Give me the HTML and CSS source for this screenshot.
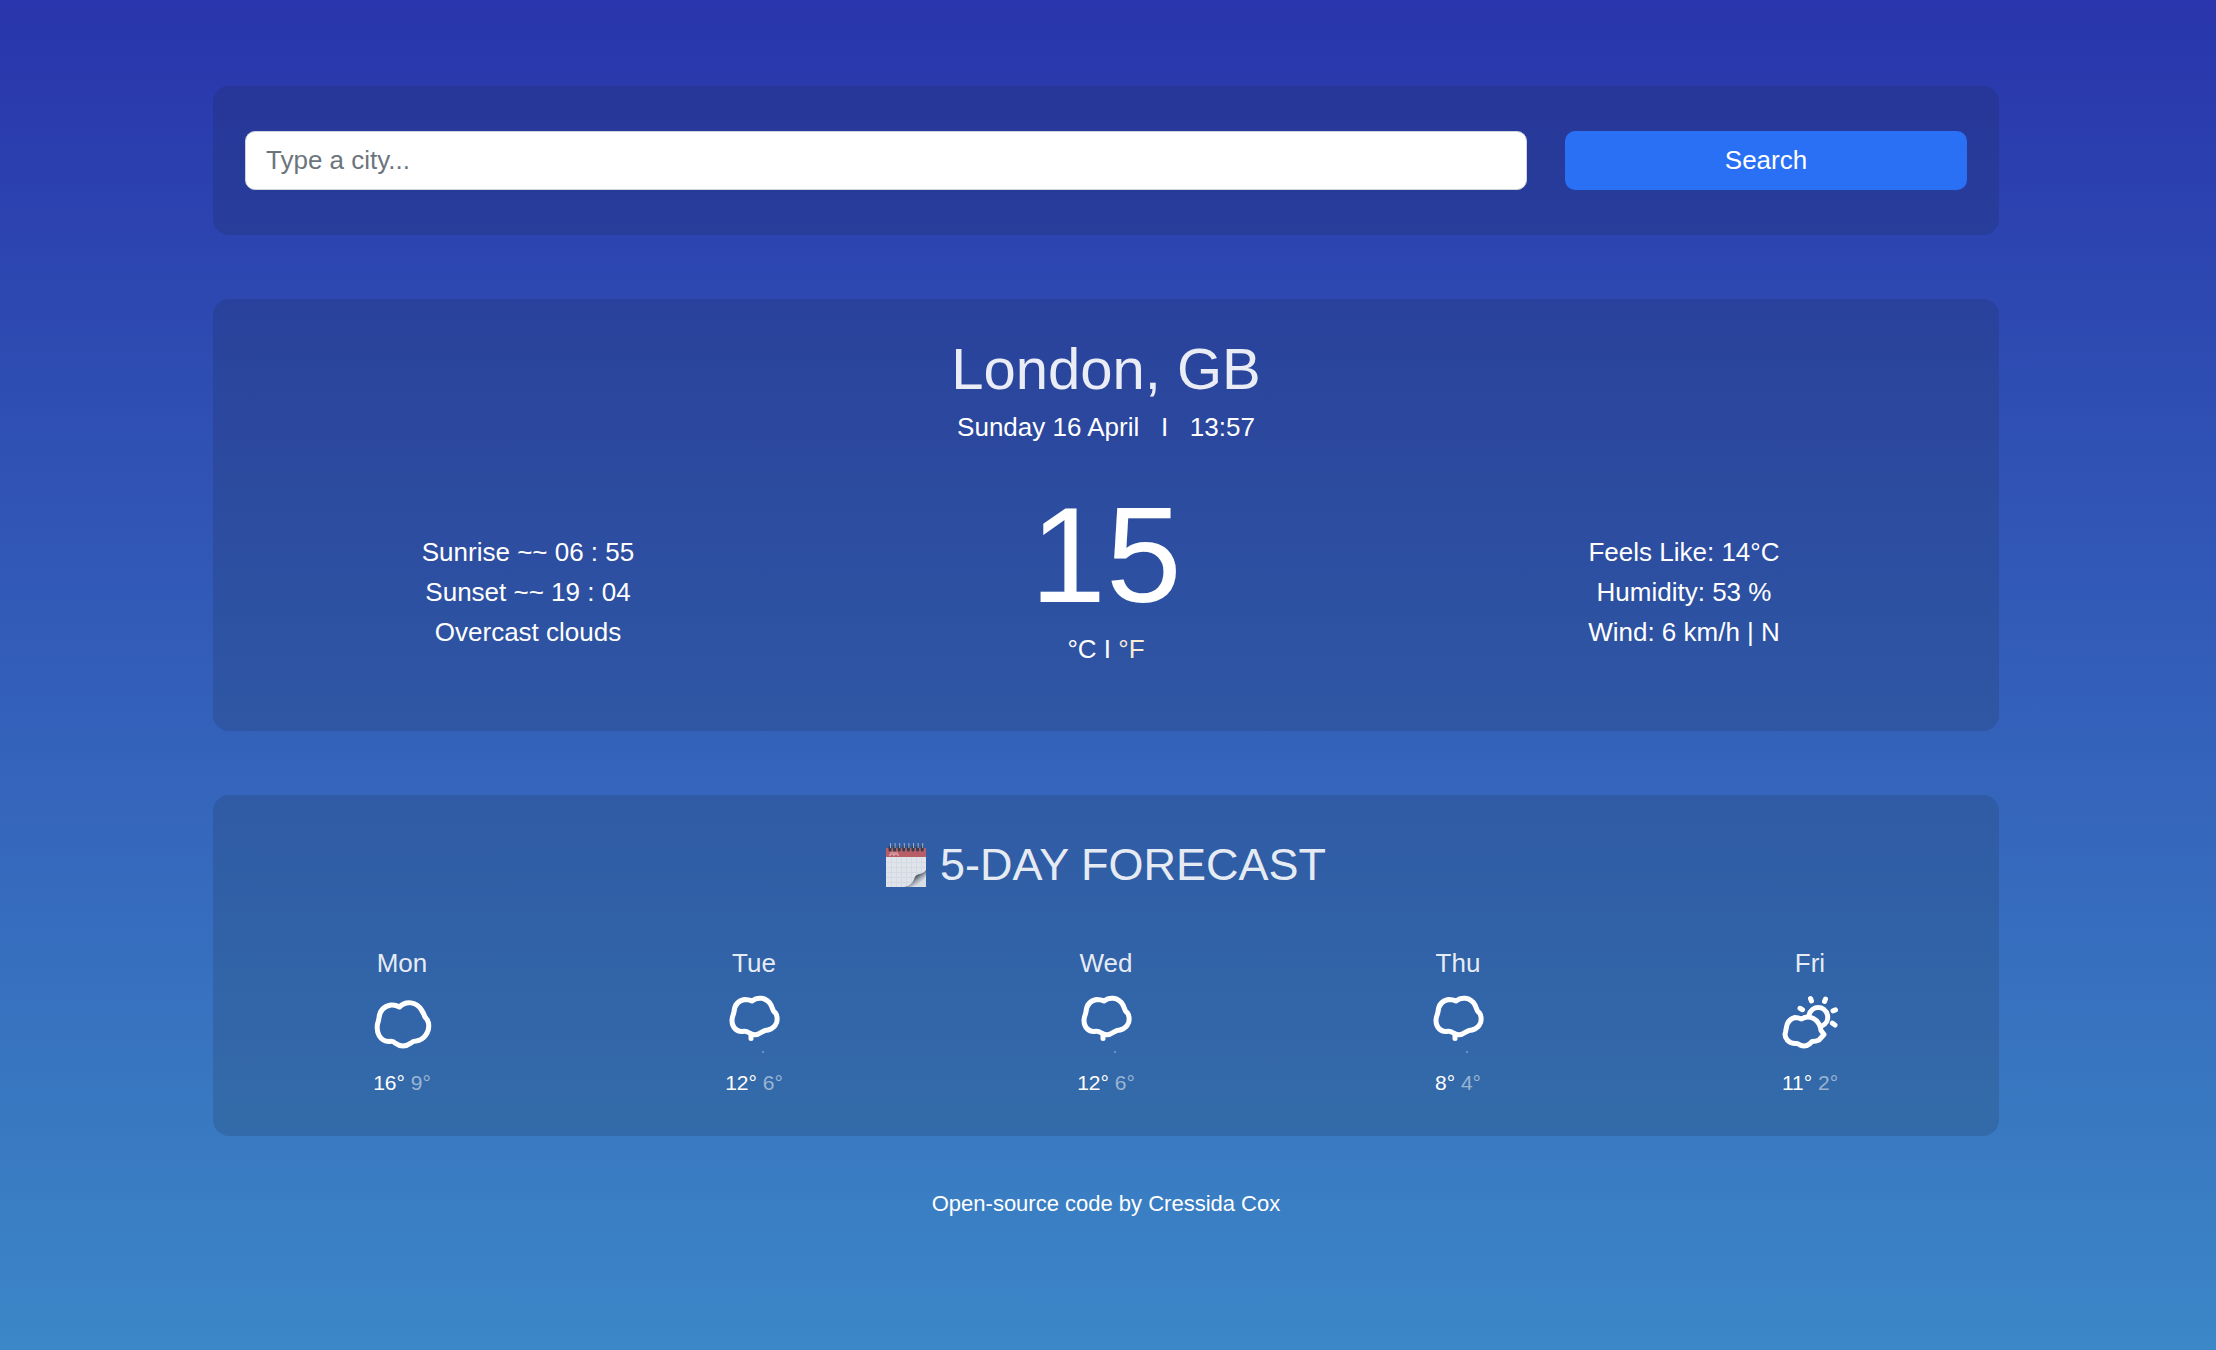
FILE: index.html
```html
<!DOCTYPE html>
<html lang="en">
<head>
  <meta charset="utf-8">
  <meta name="viewport" content="width=device-width, initial-scale=1">
  <title>Weather</title>
  <link rel="stylesheet" href="styles.css">
</head>
<body>
  <svg width="0" height="0" class="sprite" aria-hidden="true">
    <symbol id="cloud" viewBox="0 0 64 64">
      <path d="M29.500 14Q25 11.500 21 12Q10 14 9 25Q8.500 28 7.500 31C6 40 10 48 19 48.500Q23 47.500 25 50Q33 56 41 50Q43 48 46 48C54 47 60 39 58.500 30Q58 27 55 24Q53.500 20 51.500 17C47 9 36 7 29.500 14Z"/>
    </symbol>
    <symbol id="rain" viewBox="0 0 64 64">
      <path d="M30 8Q27 6.500 22.500 6.500Q12.500 8.500 12 19L10.500 24C8.500 32 13 38.500 20 38.500Q24 37.500 26.500 39.500Q33 44 39 39.500L43 37.500C52 37 57 30 54.500 22Q54 20 51.500 18L49 12C44 3.500 35 4 30 8Z"/>
      <path d="M29 41V45.500"/>
      <circle class="drop" cx="41" cy="59" r="1"/>
    </symbol>
    <symbol id="partly" viewBox="0 0 64 64">
      <path d="M23.500 26Q20 24.500 17 24.500Q9.500 26.500 8.500 34L7.500 39C5.500 45 11 51 18.500 50.500Q20 50.500 22 52Q27 54.500 31.500 51L34 48.500Q38 48.500 41 47L46 41.500L43 37.500Q42.500 34 41 31C36.500 23.500 29 22.500 23.500 26Z"/>
      <path d="M31 22C33.500 12 47 12 49.500 22C50.500 27 48 31.500 43 33.500"/>
      <path d="M32.500 5.500L33.500 8M47.500 6L46.500 8.500M22 15.300L24.500 16.700M57.500 16.900L55 17.900M54.300 30.200L57 32"/>
    </symbol>
  </svg>

  <main class="page">
    <form class="card search">
      <input class="search-input" type="search" placeholder="Type a city..." aria-label="City">
      <button class="search-button" type="button">Search</button>
    </form>

    <section class="card current">
      <h1 class="city">London, GB</h1>
      <p class="date">Sunday 16 April&nbsp;&nbsp; I &nbsp;&nbsp;13:57</p>
      <div class="details">
        <ul class="info">
          <li>Sunrise ~~ 06 : 55</li>
          <li>Sunset ~~ 19 : 04</li>
          <li>Overcast clouds</li>
        </ul>
        <div class="reading">
          <div class="temperature">15</div>
          <div class="units"><a href="#c">°C</a> I <a href="#f" class="alternate">°F</a></div>
        </div>
        <ul class="info">
          <li>Feels Like: 14°C</li>
          <li>Humidity: 53 %</li>
          <li>Wind: 6 km/h | N</li>
        </ul>
      </div>
    </section>

    <section class="card forecast">
      <h2 class="forecast-title">
        <svg class="calendar" viewBox="0 0 40 46" aria-hidden="true">
          <defs>
            <linearGradient id="curl" x1="0" y1="0" x2="1" y2="1">
              <stop offset=".42" stop-color="#3c434c"/>
              <stop offset=".62" stop-color="#a9b1be"/>
              <stop offset=".8" stop-color="#e2e6ec"/>
            </linearGradient>
          </defs>
          <path fill="#dfe3ea" d="M0 15H40V45H0Z"/>
          <path stroke="#d4d9e3" d="M5.500 15V45M10.500 15V45M15.500 15V45M20.500 15V45M25.500 15V45M30.500 15V45M35.500 15V45M0 20.500H40M0 25.500H40M0 30.500H40M0 35.500H40M0 40.500H40"/>
          <path fill="#b95d66" d="M0 6H40V15H0Z"/>
          <path fill="none" stroke="#e6bcc1" d="M5 10V13H3M7 10V13H9V10M11 10V13H13"/>
          <path fill="url(#curl)" d="M40 28C37 33 31 31 29 35C27 40 25 44 18 45H40Z"/>
          <path fill="#d9dde4" d="M40 34C36 40 30 44 24 45H40Z"/>
          <path stroke="#343f50" stroke-width="3" stroke-linecap="round" d="M4 5V8M8.600 5V8M13.200 5V8M17.800 5V8M22.400 5V8M27 5V8M31.600 5V8M36.200 5V8"/>
          <path stroke="#a4afc0" d="M4.500 1V6M9.100 1V6M13.700 1V6M18.300 1V6M22.900 1V6M27.500 1V6M32.100 1V6M36.700 1V6"/>
        </svg>
        5-DAY FORECAST
      </h2>
      <div class="days">
        <article class="day">
          <h3 class="day-name">Mon</h3>
          <svg class="icon" role="img" aria-label="Cloudy"><use href="#cloud"/></svg>
          <p class="range">16° <span class="low">9°</span></p>
        </article>
        <article class="day">
          <h3 class="day-name">Tue</h3>
          <svg class="icon" role="img" aria-label="Rain"><use href="#rain"/></svg>
          <p class="range">12° <span class="low">6°</span></p>
        </article>
        <article class="day">
          <h3 class="day-name">Wed</h3>
          <svg class="icon" role="img" aria-label="Rain"><use href="#rain"/></svg>
          <p class="range">12° <span class="low">6°</span></p>
        </article>
        <article class="day">
          <h3 class="day-name">Thu</h3>
          <svg class="icon" role="img" aria-label="Rain"><use href="#rain"/></svg>
          <p class="range">8° <span class="low">4°</span></p>
        </article>
        <article class="day">
          <h3 class="day-name">Fri</h3>
          <svg class="icon" role="img" aria-label="Partly cloudy"><use href="#partly"/></svg>
          <p class="range">11° <span class="low">2°</span></p>
        </article>
      </div>
    </section>

    <footer class="credit"><a href="#source">Open-source code</a> by Cressida Cox</footer>
  </main>
</body>
</html>
```
FILE: styles.css
```css
* {
  box-sizing: border-box;
}

body {
  margin: 0;
  min-height: 100vh;
  background: linear-gradient(#2935ac 0%, #2d48b1 22%, #3463bb 56%, #397ac2 85%, #3b87c7 100%);
  color: #fff;
  font: 26px/40px Helvetica, "Liberation Sans", Arial, sans-serif;
}

h1, h2, h3, p, ul {
  margin: 0;
  padding: 0;
  font-weight: 400;
}

ul {
  list-style: none;
}

a {
  color: inherit;
  text-decoration: none;
}

.sprite {
  position: absolute;
}

.page {
  display: flex;
  flex-direction: column;
  gap: 64px;
  padding: 86px 217px 64px 213px;
}

.card {
  border-radius: 16px;
  background: rgba(20, 30, 30, 0.14);
}

.search {
  display: grid;
  grid-template-columns: 1282fr 402fr;
  gap: 38px;
  padding: 45px 32px;
}

.search-input,
.search-button {
  width: 100%;
  height: 59px;
  border-radius: 10px;
  font: inherit;
}

.search-input {
  padding: 0 20px;
  border: 1px solid #ced4da;
  background: #fff;
  color: #212529;
}

.search-input::placeholder {
  color: #6c757d;
  opacity: 1;
}

.search-button {
  padding: 0 0 2px;
  border: 0;
  background: #2a70f4;
  color: #fff;
}

.current {
  padding: 34px 26px 62px;
  text-align: center;
}

.city {
  margin-bottom: 2px;
  font-size: 58px;
  line-height: 72px;
  color: rgba(255, 255, 255, 0.9);
}

.details {
  display: grid;
  grid-template-columns: repeat(3, 1fr);
  margin-top: 34px;
}

.info {
  padding-top: 51px;
}

.temperature {
  font-size: 136px;
  line-height: 148px;
}

.alternate {
  color: #faebd7;
}

.forecast {
  padding: 42px 13px 37px;
  text-align: center;
}

.forecast-title {
  display: flex;
  align-items: center;
  justify-content: center;
  gap: 14px;
  font-size: 45px;
  line-height: 56px;
  color: rgba(255, 255, 255, 0.9);
}

.calendar {
  width: 40px;
  height: 46px;
}

.days {
  display: grid;
  grid-template-columns: repeat(5, 1fr);
  margin-top: 50px;
}

.day-name {
  font-size: 26px;
  color: rgba(255, 255, 255, 0.9);
}

.icon {
  display: block;
  width: 64px;
  height: 64px;
  margin: 10px auto;
  fill: none;
  stroke: #fff;
  stroke-width: 5;
  stroke-linecap: round;
  stroke-linejoin: round;
}

.drop {
  fill: #fff;
  fill-opacity: 0.4;
  stroke: none;
}

.range {
  font-size: 21px;
  line-height: 32px;
}

.low {
  color: rgba(255, 255, 255, 0.5);
}

.credit {
  margin-top: -16px;
  font-size: 22px;
  text-align: center;
}
```
